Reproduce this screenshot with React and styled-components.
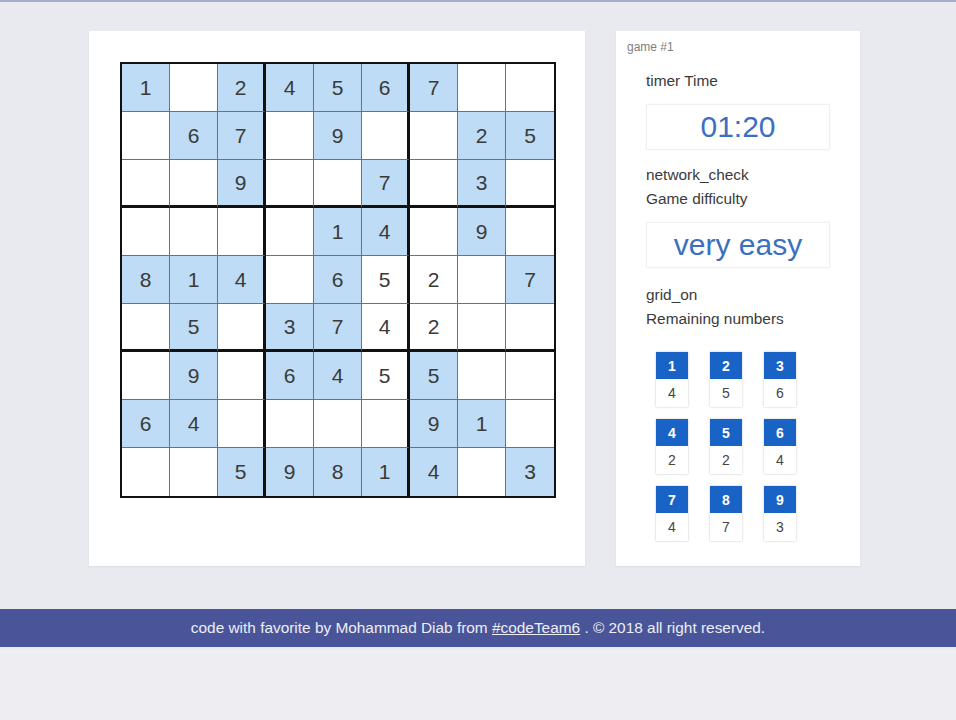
import React from 'react'
import styled, { createGlobalStyle } from 'styled-components'

const GlobalStyle = createGlobalStyle`
  html, body {
    margin: 0;
    padding: 0;
    background: #e9eaef;
    font-family: "Liberation Sans", Arial, sans-serif;
  }
`

// 0 = empty, positive = given (blue), negative = typed by player (white)
const board = [
  [1, 0, 2, 4, 5, 6, 7, 0, 0],
  [0, 6, 7, 0, 9, 0, 0, 2, 5],
  [0, 0, 9, 0, 0, 7, 0, 3, 0],
  [0, 0, 0, 0, 1, 4, 0, 9, 0],
  [8, 1, 4, 0, 6, -5, -2, 0, 7],
  [0, 5, 0, 3, 7, -4, -2, 0, 0],
  [0, 9, 0, 6, 4, -5, 5, 0, 0],
  [6, 4, 0, 0, 0, 0, 9, 1, 0],
  [0, 0, 5, 9, 8, 1, 4, 0, 3],
]

const remaining = [4, 5, 6, 2, 2, 4, 4, 7, 3]

const Page = styled.div`
  min-height: 720px;
  border-top: 2px solid #a3abc9;
  box-sizing: border-box;
  background: linear-gradient(#e9eaef, #e9eaef 647px, #eeeef2 647px);
`

const Main = styled.div`
  display: flex;
  gap: 31px;
  padding: 29px 0 0 89px;
`

const Card = styled.div`
  background: #fff;
  height: 535px;
  box-sizing: border-box;
  box-shadow: 0 1px 2px rgba(0, 0, 0, 0.06);
`

const BoardCard = styled(Card)`
  width: 496px;
  padding: 31px;
`

const Grid = styled.div`
  display: grid;
  grid-template-columns: repeat(9, 48px);
  border: 2px solid #111;
  width: max-content;
`

const Cell = styled.div`
  width: 48px;
  height: 48px;
  box-sizing: border-box;
  display: flex;
  align-items: center;
  justify-content: center;
  font-size: 21px;
  color: #3a3a3a;
  background: ${p => (p.$given ? '#bedcf5' : '#fff')};
  border-right: ${p => (p.$col === 8 ? 'none' : p.$col % 3 === 2 ? '3px solid #111' : '1px solid #6f7275')};
  border-bottom: ${p => (p.$row === 8 ? 'none' : p.$row % 3 === 2 ? '3px solid #111' : '1px solid #6f7275')};
`

const SideCard = styled(Card)`
  width: 244px;
  padding: 10px 10px 0 10px;
`

const GameId = styled.div`
  font-size: 12px;
  line-height: 12px;
  color: #808080;
  padding-left: 1px;
`

const Section = styled.div`
  padding-left: 20px;
`

const Label = styled.div`
  font-size: 15.4px;
  line-height: 24px;
  color: #3a3a3a;
  margin-top: ${p => p.$top}px;
`

const ValueBox = styled.div`
  width: 184px;
  height: 46px;
  margin-top: 11px;
  box-sizing: border-box;
  border: 1px solid #f0f0f2;
  box-shadow: 0 0 2px rgba(0, 0, 0, 0.05);
  display: flex;
  align-items: center;
  justify-content: center;
  font-size: 30px;
  color: #3a6fc2;
`

const Tiles = styled.div`
  display: grid;
  grid-template-columns: repeat(3, 32px);
  column-gap: 22px;
  row-gap: 12px;
  margin: 21px 0 0 10px;
`

const Tile = styled.div`
  width: 32px;
  box-shadow: 0 0 2px rgba(0, 0, 0, 0.25);
`

const TileHead = styled.div`
  height: 27px;
  background: #1a63c6;
  color: #fff;
  font-weight: bold;
  font-size: 14px;
  display: flex;
  align-items: center;
  justify-content: center;
`

const TileCount = styled.div`
  height: 28px;
  background: #fff;
  color: #444;
  font-size: 14px;
  display: flex;
  align-items: center;
  justify-content: center;
`

const Footer = styled.footer`
  margin-top: 43px;
  height: 38px;
  background: #4a5599;
  color: #eceef6;
  font-size: 15.4px;
  display: flex;
  align-items: center;
  justify-content: center;

  a {
    color: #eceef6;
    text-decoration: underline;
  }
`

export default function App() {
  return (
    <Page>
      <GlobalStyle />
      <Main>
        <BoardCard>
          <Grid>
            {board.map((row, r) =>
              row.map((v, c) => (
                <Cell key={`${r}-${c}`} $row={r} $col={c} $given={v > 0}>
                  {v !== 0 ? Math.abs(v) : ''}
                </Cell>
              ))
            )}
          </Grid>
        </BoardCard>
        <SideCard>
          <GameId>game #1</GameId>
          <Section>
            <Label $top={16}>timer Time</Label>
            <ValueBox>01:20</ValueBox>
            <Label $top={13}>
              network_check
              <br />
              Game difficulty
            </Label>
            <ValueBox>very easy</ValueBox>
            <Label $top={15}>
              grid_on
              <br />
              Remaining numbers
            </Label>
            <Tiles>
              {remaining.map((n, i) => (
                <Tile key={i}>
                  <TileHead>{i + 1}</TileHead>
                  <TileCount>{n}</TileCount>
                </Tile>
              ))}
            </Tiles>
          </Section>
        </SideCard>
      </Main>
      <Footer>
        <span>
          code with favorite by Mohammad Diab from <a href="#">#codeTeam6</a> . © 2018 all right reserved.
        </span>
      </Footer>
    </Page>
  )
}
